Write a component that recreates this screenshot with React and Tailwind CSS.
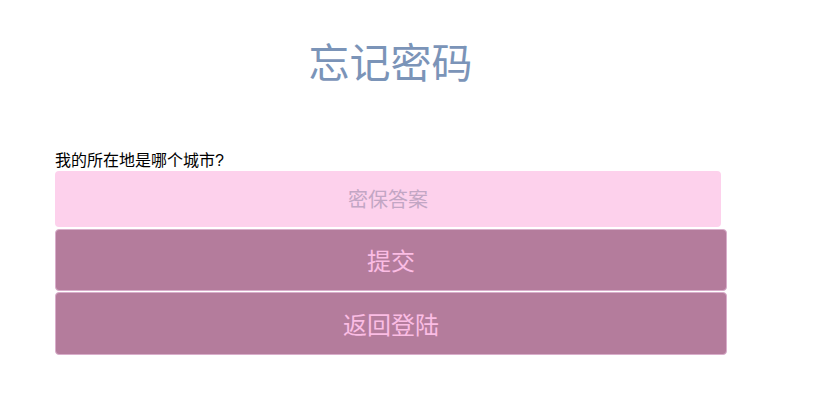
import React, { useState } from 'react';

const font = { fontFamily: '"Liberation Sans", "Noto Sans CJK SC", sans-serif' };

const App = () => {
  const [answer, setAnswer] = useState('');

  return (
    <div className="min-h-screen w-[814px] h-[414px] bg-white" style={font}>
      <div className="ml-[55px] w-[672px] pt-[34px]">
        <h1 className="w-[666px] pl-[5px] text-center text-[41px] leading-[60px] font-normal text-[#7b94b8]">
          忘记密码
        </h1>
        <p className="mt-[57px] text-[16px] leading-[20px] text-black">我的所在地是哪个城市?</p>
        <input
          value={answer}
          onChange={(e) => setAnswer(e.target.value)}
          placeholder="密保答案"
          className="block w-[666px] h-[56px] pt-[3px] rounded-[4px] bg-[#fdd1ec] text-center text-[20px] text-[#a0809c] placeholder:text-[#c2a6c4] outline-none"
        />
        <div className="mt-[2px] flex flex-col gap-[1px]">
          <button className="h-[62px] w-full pt-[4px] rounded-[4px] border border-[#d9aecb] bg-[#b47c9c] text-[24px] text-[#fbbde4]">
            提交
          </button>
          <button className="h-[63px] w-full pt-[4px] rounded-[4px] border border-[#d9aecb] bg-[#b47c9c] text-[24px] text-[#fbbde4]">
            返回登陆
          </button>
        </div>
      </div>
    </div>
  );
};

export default App;
